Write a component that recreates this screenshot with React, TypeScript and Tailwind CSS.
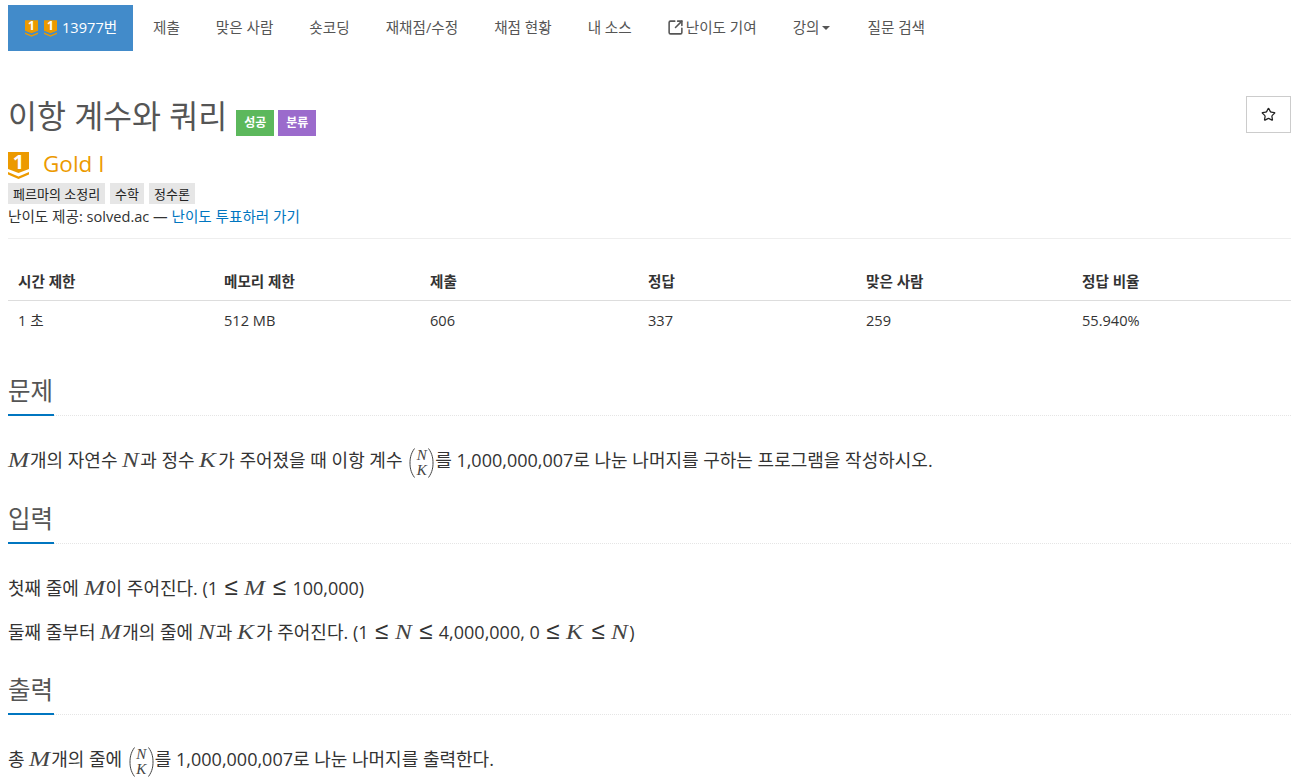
import { Star, SquareArrowOutUpRight } from "lucide-react";

const navItems = ["제출", "맞은 사람", "숏코딩", "재채점/수정", "채점 현황", "내 소스"];

const stats = [
  ["시간 제한", "1 초"],
  ["메모리 제한", "512 MB"],
  ["제출", "606"],
  ["정답", "337"],
  ["맞은 사람", "259"],
  ["정답 비율", "55.940%"],
];

function TierIcon({ className, digit }: { className: string; digit: string }) {
  return (
    <span className={`relative inline-block shrink-0 ${className}`}>
      <svg viewBox="0 0 21 27" className="w-full h-full block">
        <path d="M0 0H21V17L10.5 21L0 17Z" fill="#ec9a00" />
        <path d="M0 20L10.5 24.5L21 20V22.5L10.5 27L0 22.5Z" fill="#ec9a00" />
      </svg>
      <span className={`absolute top-0 inset-x-0 text-center font-bold leading-none text-white ${digit}`}>1</span>
    </span>
  );
}

// math letters, stretched a bit to get the width of the math font
const mathWidth: Record<string, string> = {
  M: "w-[22px]",
  N: "w-[18px]",
  K: "w-[19px]",
};

function V({ children }: { children: string }) {
  return (
    <span className={`inline-block align-baseline leading-none ${mathWidth[children]}`}>
      <i className="inline-block origin-left scale-x-[1.2] font-['Liberation_Serif',serif] text-[21px] leading-none text-[#444]">
        {children}
      </i>
    </span>
  );
}

function Le() {
  return <span className="font-['DejaVu_Sans',sans-serif] text-[24px] leading-none font-light mx-[6.5px]">≤</span>;
}

function Paren({ flip }: { flip?: boolean }) {
  return (
    <svg viewBox="0 0 6 30" className={`w-[6px] h-[30px] ${flip ? "-scale-x-100" : ""}`}>
      <path d="M5.5 0.5C1.5 6 1 11 1 15C1 19 1.5 24 5.5 29.5" fill="none" stroke="#444" strokeWidth="1" />
    </svg>
  );
}

function Binom() {
  return (
    <span className="inline-flex items-center align-middle h-[30px] w-[25px] ml-[2px] mr-[1px] relative top-[1px] leading-none">
      <Paren />
      <span className="flex flex-col items-center flex-1 font-['Liberation_Serif',serif] italic text-[15px] leading-[15px] text-[#444]">
        <span>N</span>
        <span>K</span>
      </span>
      <Paren flip />
    </span>
  );
}

function Heading({ title }: { title: string }) {
  return (
    <div className="border-b border-dotted border-[#e5e5e5] h-[41px] pt-[2px] relative">
      <h2 className="text-[24.5px] leading-[28px] text-[#555]">{title}</h2>
      <div className="absolute left-0 -bottom-[1px] w-[46px] h-[2px] bg-[#0076c0]" />
    </div>
  );
}

export default function App() {
  return (
    <div className="bg-white h-[778px] overflow-hidden pl-2 pr-[17px] text-[14.6px] leading-5 text-[#333] font-['Open_Sans','Noto_Sans_CJK_KR',sans-serif]">
      {/* Nav */}
      <div className="flex items-stretch h-[46px] mt-[5px] text-[#555]">
        <div className="flex items-center w-[125px] pl-[17px] pb-[2px] bg-[#428bca] text-white">
          <TierIcon className="w-[13px] h-[17px] mr-[6px] mt-[2px]" digit="text-[12px]" />
          <TierIcon className="w-[13px] h-[17px] mr-[5px] mt-[2px]" digit="text-[12px]" />
          13977번
        </div>
        <div className="flex ml-[2px]">
          {navItems.map((item) => (
            <div key={item} className="flex items-center px-[18px] pb-[2px]">
              {item}
            </div>
          ))}
          <div className="flex items-center px-[18px] pb-[2px]">
            <SquareArrowOutUpRight className="w-[17px] h-[17px] -ml-[1px] mr-[2px]" strokeWidth={2.2} />
            난이도 기여
          </div>
          <div className="flex items-center px-[18px] pb-[2px]">
            강의
            <span className="ml-[2px] mr-[2px] mt-[2px] w-0 h-0 border-x-[4px] border-x-transparent border-t-[4px] border-t-[#555]" />
          </div>
          <div className="flex items-center px-[18px] pb-[2px]">질문 검색</div>
        </div>
      </div>

      {/* Title */}
      <div className="flex justify-between mt-[45px]">
        <div className="flex items-center h-[40px]">
          <h1 className="text-[31.5px] leading-[40px] text-[#555]">이항 계수와 쿼리</h1>
          <span className="ml-[9px] mt-[14px] flex items-center justify-center w-[38px] h-[26px] bg-[#5cb85c] text-white text-[12px] font-bold">
            성공
          </span>
          <span className="ml-[4px] mt-[14px] flex items-center justify-center w-[38px] h-[26px] bg-[#9b6bcc] text-white text-[12px] font-bold">
            분류
          </span>
        </div>
        <div className="flex items-center justify-center w-[45px] h-[37px] border border-[#cccccc] text-[#222]">
          <Star className="w-[15px] h-[15px]" strokeWidth={2} />
        </div>
      </div>

      {/* Tier */}
      <div className="flex items-center h-[28px] mt-[15px]">
        <TierIcon className="w-[21px] h-[27px]" digit="text-[20px]" />
        <span className="ml-[14px] text-[22.5px] text-[#ec9a00] relative top-[-1px]">Gold I</span>
      </div>

      {/* Tags */}
      <div className="flex gap-[5px] mt-[4px] text-[13px] text-[#222]">
        <span className="flex items-center h-[21px] px-[5px] bg-[#e6e6e6]">페르마의 소정리</span>
        <span className="flex items-center h-[21px] px-[5px] bg-[#e6e6e6]">수학</span>
        <span className="flex items-center h-[21px] px-[5px] bg-[#e6e6e6]">정수론</span>
      </div>
      <p className="mt-[2px] pb-[12px] border-b border-[#eeeeee]">
        난이도 제공: solved.ac — <span className="text-[#0076c0]">난이도 투표하러 가기</span>
      </p>

      {/* Stats */}
      <div className="grid grid-cols-[206px_206px_218px_218px_216px_1fr] mt-[22px]">
        {stats.map(([label]) => (
          <div key={label} className="h-[40px] flex items-center pl-[10px] font-bold border-b border-[#dddddd]">
            {label}
          </div>
        ))}
        {stats.map(([label, value]) => (
          <div key={label} className="h-[38px] flex items-center pl-[10px]">
            {value}
          </div>
        ))}
      </div>

      {/* Sections */}
      <section className="mt-[36px]">
        <Heading title="문제" />
        <p className="mt-[28px] text-[18px] leading-[32px]">
          <V>M</V>개의 자연수 <V>N</V>과 정수 <V>K</V>가 주어졌을 때 이항 계수 <Binom />를 1,000,000,007로 나눈 나머지를 구하는 프로그램을 작성하시오.
        </p>
      </section>

      <section className="mt-[26px]">
        <Heading title="입력" />
        <p className="mt-[28px] text-[18px] leading-[32px]">
          첫째 줄에 <V>M</V>이 주어진다. (1<Le /><V>M</V><Le />100,000)
        </p>
        <p className="mt-[12px] text-[18px] leading-[32px]">
          둘째 줄부터 <V>M</V>개의 줄에 <V>N</V>과 <V>K</V>가 주어진다. (1<Le /><V>N</V><Le />4,000,000, 0<Le /><V>K</V><Le /><V>N</V>)
        </p>
      </section>

      <section className="mt-[26px]">
        <Heading title="출력" />
        <p className="mt-[28px] text-[18px] leading-[32px]">
          총 <V>M</V>개의 줄에 <Binom />를 1,000,000,007로 나눈 나머지를 출력한다.
        </p>
      </section>
    </div>
  );
}
